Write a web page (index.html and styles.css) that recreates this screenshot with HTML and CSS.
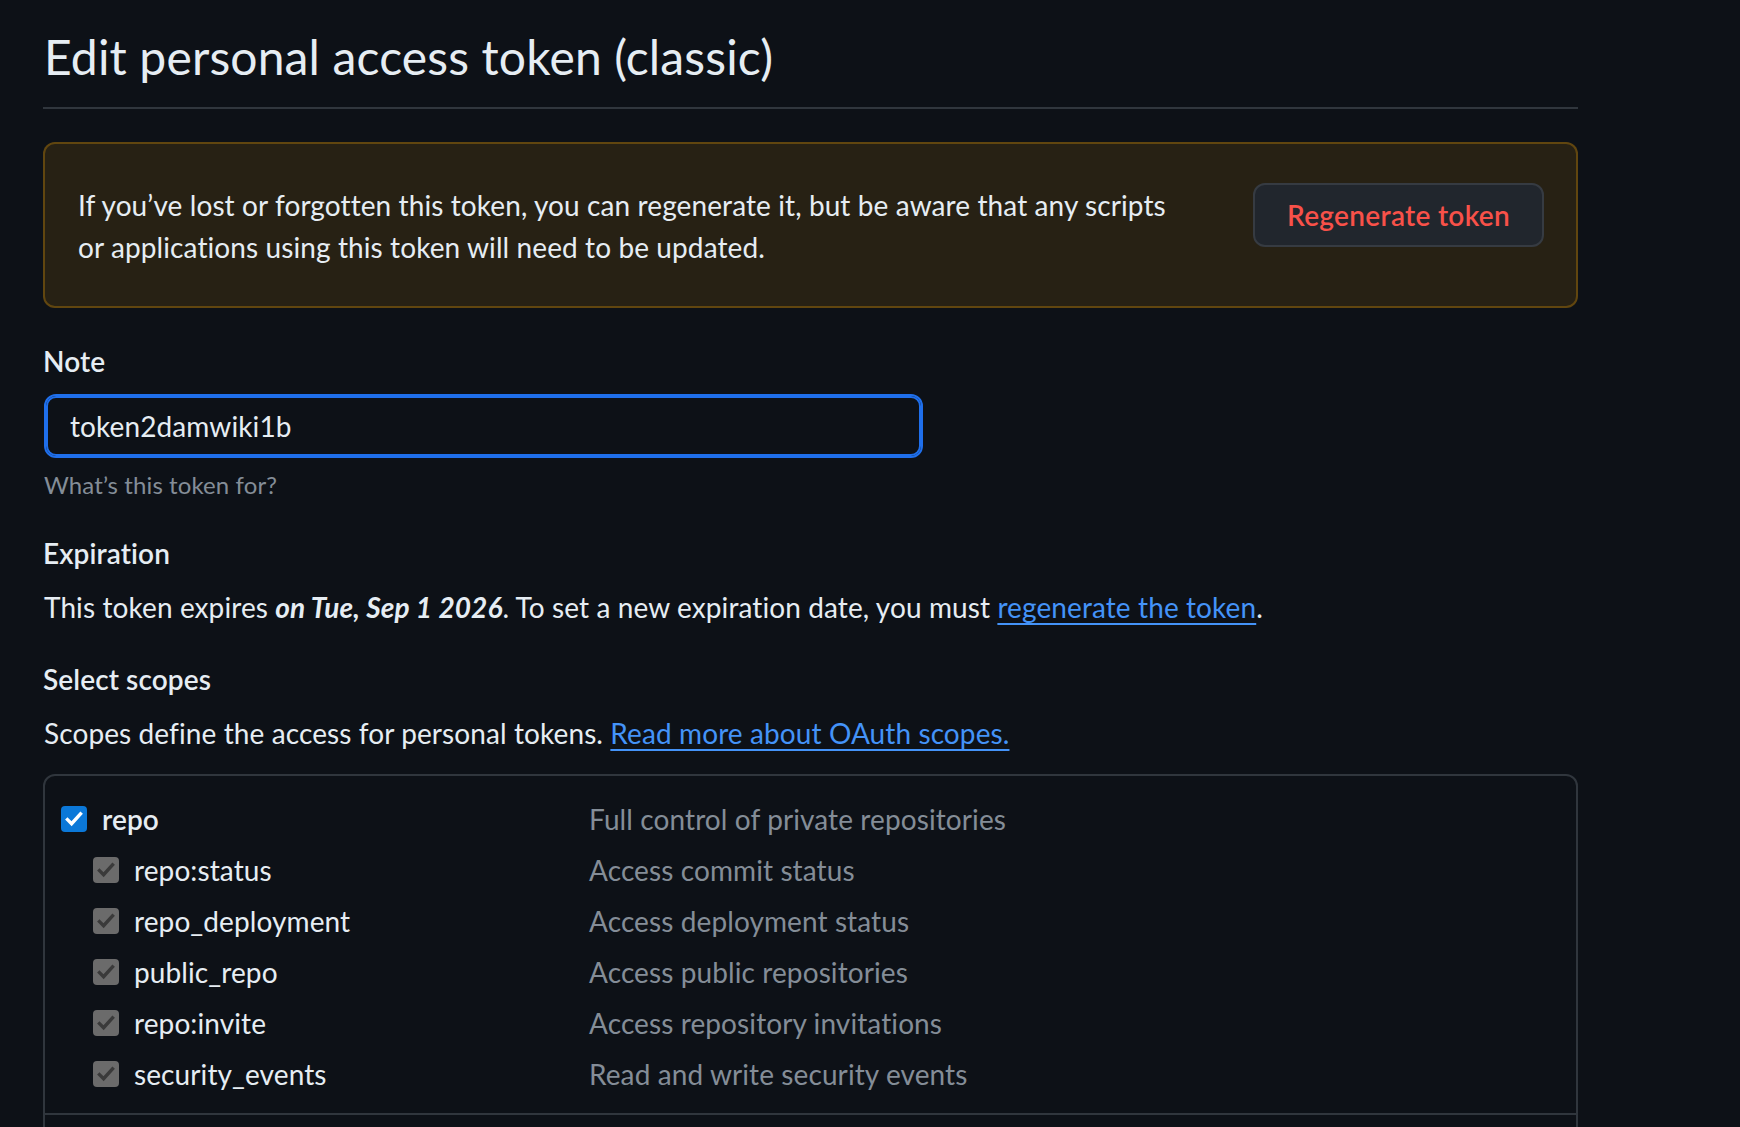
FILE: index.html
```html
<!DOCTYPE html>
<html lang="en">
<head>
<meta charset="utf-8">
<title>Edit personal access token (classic)</title>
<link rel="stylesheet" href="styles.css">
</head>
<body>
<main class="page">
  <h2 class="subhead">Edit personal access token (classic)</h2>

  <div class="flash">
    <p class="flash-text">If you’ve lost or forgotten this token, you can regenerate it, but be aware that any scripts or applications using this token will need to be updated.</p>
    <button class="btn-danger" type="button">Regenerate token</button>
  </div>

  <div class="form-group">
    <label class="label" for="note">Note</label>
    <input id="note" class="input input-focus" type="text" value="token2damwiki1b">
    <p class="hint">What’s this token for?</p>
  </div>

  <h3 class="label section">Expiration</h3>
  <p class="para">This token expires <strong><em>on Tue, Sep 1 2026</em></strong>. To set a new expiration date, you must <a class="link" href="#">regenerate the token</a>.</p>

  <h3 class="label section">Select scopes</h3>
  <p class="para">Scopes define the access for personal tokens. <a class="link" href="#">Read more about OAuth scopes.</a></p>

  <div class="scopes">
    <div class="scope-group">
      <div class="scope-row">
        <span class="scope-name parent">
          <svg class="cb" viewBox="0 0 26 26"><rect width="26" height="26" rx="4" fill="#0b78d8"/><path d="M6.5 13.6l4.1 4.1 8.9-9.8" fill="none" stroke="#ffffff" stroke-width="3.4" stroke-linecap="square"/></svg>repo</span>
        <span class="scope-desc">Full control of private repositories</span>
      </div>
      <div class="scope-row">
        <span class="scope-name child">
          <svg class="cb" viewBox="0 0 26 26"><rect width="26" height="26" rx="4" fill="#6b6b6b"/><path d="M6.5 13.6l4.1 4.1 8.9-9.8" fill="none" stroke="#3a3a3a" stroke-width="3.4" stroke-linecap="square"/></svg>repo:status</span>
        <span class="scope-desc">Access commit status</span>
      </div>
      <div class="scope-row">
        <span class="scope-name child">
          <svg class="cb" viewBox="0 0 26 26"><rect width="26" height="26" rx="4" fill="#6b6b6b"/><path d="M6.5 13.6l4.1 4.1 8.9-9.8" fill="none" stroke="#3a3a3a" stroke-width="3.4" stroke-linecap="square"/></svg>repo_deployment</span>
        <span class="scope-desc">Access deployment status</span>
      </div>
      <div class="scope-row">
        <span class="scope-name child">
          <svg class="cb" viewBox="0 0 26 26"><rect width="26" height="26" rx="4" fill="#6b6b6b"/><path d="M6.5 13.6l4.1 4.1 8.9-9.8" fill="none" stroke="#3a3a3a" stroke-width="3.4" stroke-linecap="square"/></svg>public_repo</span>
        <span class="scope-desc">Access public repositories</span>
      </div>
      <div class="scope-row">
        <span class="scope-name child">
          <svg class="cb" viewBox="0 0 26 26"><rect width="26" height="26" rx="4" fill="#6b6b6b"/><path d="M6.5 13.6l4.1 4.1 8.9-9.8" fill="none" stroke="#3a3a3a" stroke-width="3.4" stroke-linecap="square"/></svg>repo:invite</span>
        <span class="scope-desc">Access repository invitations</span>
      </div>
      <div class="scope-row">
        <span class="scope-name child">
          <svg class="cb" viewBox="0 0 26 26"><rect width="26" height="26" rx="4" fill="#6b6b6b"/><path d="M6.5 13.6l4.1 4.1 8.9-9.8" fill="none" stroke="#3a3a3a" stroke-width="3.4" stroke-linecap="square"/></svg>security_events</span>
        <span class="scope-desc">Read and write security events</span>
      </div>
    </div>
    <div class="scope-group"></div>
  </div>
</main>
</body>
</html>
```

FILE: styles.css
```css
* { box-sizing: border-box; }

html, body {
  margin: 0;
  height: 100%;
  overflow: hidden;
}

body {
  background: #0d1117;
  color: #e6edf3;
  font-family: Lato, "Noto Sans", "DejaVu Sans", sans-serif;
  font-size: 28px;
  line-height: 42px;
  letter-spacing: 0.1px;
}

.page {
  width: 1535px;
  margin-left: 43px;
  padding-top: 21px;
}

.subhead {
  margin: 0;
  padding: 0 0 14px 1px;
  font-size: 48px;
  font-weight: 400;
  line-height: 72px;
  letter-spacing: 0.15px;
  border-bottom: 2px solid #30363d;
}

.flash {
  margin-top: 33px;
  display: flex;
  align-items: flex-start;
  padding: 40px 32px 38px;
  border: 2px solid rgba(187, 128, 9, 0.4);
  background: rgba(187, 128, 9, 0.15);
  border-radius: 12px;
}

.flash-text {
  margin: 0;
  flex: 0 1 1102px;
  padding-left: 1px;
}

.btn-danger {
  flex: none;
  margin-left: auto;
  margin-top: -1px;
  height: 64px;
  padding: 0 32px;
  border: 2px solid #363b42;
  border-radius: 12px;
  background: #21262d;
  color: #f85149;
  font-family: inherit;
  font-size: 28px;
  font-weight: 600;
  line-height: 60px;
  letter-spacing: 0.3px;
}

.form-group {
  margin-top: 32px;
}

.label {
  display: block;
  margin: 0 0 12px;
  font-size: 28px;
  font-weight: 600;
  line-height: 42px;
}

.section {
  margin-top: 30px;
}

.form-group + .section {
  margin-top: 29px;
}

.input {
  display: block;
  width: 879px;
  height: 64px;
  margin-left: 1px;
  padding: 0 24px;
  border: 2px solid #30363d;
  border-radius: 12px;
  background: #0d1117;
  color: #e6edf3;
  font-family: inherit;
  font-size: 28px;
  letter-spacing: 0.1px;
  outline: none;
}

.input-focus {
  border-color: #1f6feb;
  box-shadow: inset 0 0 0 2px #1f6feb;
}

.hint {
  margin: 9px 0 0 1px;
  font-size: 24px;
  line-height: 36px;
  color: #848d97;
}

.para {
  margin: 0;
  padding-left: 1px;
}

.link {
  color: #4493f8;
  text-decoration: underline;
  text-underline-offset: 5px;
  text-decoration-thickness: 2px;
}

.scopes {
  margin-top: 20px;
  border: 2px solid #30363d;
  border-radius: 12px;
}

.scope-group {
  padding: 17px 0 14px;
}

.scope-group + .scope-group {
  border-top: 2px solid #30363d;
  height: 60px;
}

.scope-row {
  display: grid;
  grid-template-columns: 544px 1fr;
  align-items: center;
  height: 51px;
}

.scope-name {
  display: flex;
  align-items: center;
}

.scope-name.parent {
  padding-left: 16px;
  font-weight: 600;
}

.scope-name.child {
  padding-left: 48px;
}

.cb {
  flex: none;
  width: 26px;
  height: 26px;
  margin-right: 15px;
}

.scope-desc {
  color: #848d97;
}
```
